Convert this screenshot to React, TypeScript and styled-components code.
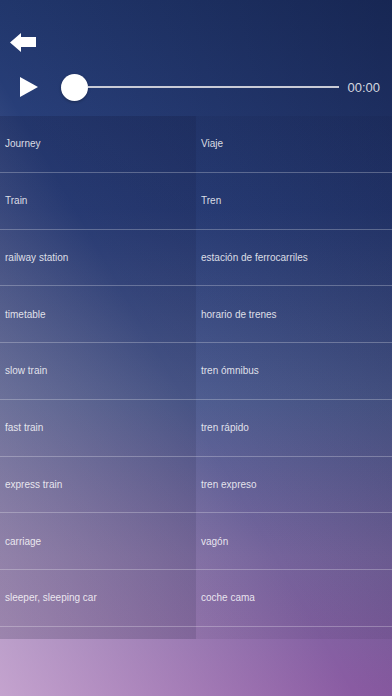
import React from 'react'
import styled, { createGlobalStyle } from 'styled-components'

const GlobalStyle = createGlobalStyle`
  html, body {
    margin: 0;
    padding: 0;
    height: 100%;
  }
  body {
    font-family: "Liberation Sans", Arial, sans-serif;
    -webkit-font-smoothing: antialiased;
  }
`

const Screen = styled.div`
  position: relative;
  width: 392px;
  height: 696px;
  overflow: hidden;
  display: flex;
  flex-direction: column;
  background:
    linear-gradient(60deg, rgba(255, 235, 250, 0.5) 0%, rgba(255, 255, 255, 0) 45%, rgba(5, 10, 40, 0.38) 100%),
    linear-gradient(180deg, #22386e 0%, #2d4482 30%, #56659a 58%, #7d6aa4 80%, #8a5aa2 100%);
`

const Header = styled.div`
  height: 116px;
  flex-shrink: 0;
  display: flex;
  flex-direction: column;
  box-sizing: border-box;
  padding-top: 33px;
`

const BackButton = styled.button`
  width: 26px;
  height: 19px;
  margin-left: 10px;
  padding: 0;
  border: none;
  background: none;
  display: flex;
`

const Player = styled.div`
  display: flex;
  align-items: center;
  height: 28px;
  margin-top: 21px;
  padding-left: 20px;
  padding-right: 12px;
`

const PlayButton = styled.button`
  width: 18px;
  height: 20px;
  padding: 0;
  border: none;
  background: none;
  display: flex;
`

const Slider = styled.div`
  flex: 1;
  display: flex;
  align-items: center;
  margin-left: 23px;
  margin-right: 8px;
`

const Knob = styled.div`
  width: 27px;
  height: 27px;
  border-radius: 50%;
  background: #ffffff;
  box-shadow: 0 1px 3px rgba(0, 0, 0, 0.3);
  flex-shrink: 0;
`

const Track = styled.div`
  flex: 1;
  height: 2px;
  background: #c9cbd6;
`

const Time = styled.span`
  font-size: 13px;
  color: rgba(255, 255, 255, 0.82);
`

const Table = styled.div`
  height: 523px;
  flex-shrink: 0;
  overflow: hidden;
  background: linear-gradient(
    90deg,
    rgba(10, 10, 40, 0.18) 0%,
    rgba(10, 10, 40, 0.18) 50%,
    rgba(10, 10, 40, 0.07) 50%,
    rgba(10, 10, 40, 0.07) 100%
  );
`

const Row = styled.div`
  display: grid;
  grid-template-columns: 196px 196px;
  height: 56.75px;
  box-sizing: border-box;
  border-bottom: 1px solid rgba(255, 255, 255, 0.26);
`

const Cell = styled.div`
  display: flex;
  align-items: center;
  padding-left: 5px;
  font-size: 10px;
  color: rgba(255, 255, 255, 0.84);
  white-space: nowrap;
`

const words: [string, string][] = [
  ['Journey', 'Viaje'],
  ['Train', 'Tren'],
  ['railway station', 'estación de ferrocarriles'],
  ['timetable', 'horario de trenes'],
  ['slow train', 'tren ómnibus'],
  ['fast train', 'tren rápido'],
  ['express train', 'tren expreso'],
  ['carriage', 'vagón'],
  ['sleeper, sleeping car', 'coche cama'],
]

export default function App() {
  return (
    <>
      <GlobalStyle />
      <Screen>
        <Header>
          <BackButton aria-label="back">
            <svg width="26" height="19" viewBox="0 0 26 19">
              <path d="M0 9.5 L11 0 L11 4 L26 4 L26 14 L11 14 L11 19 Z" fill="#fff" />
            </svg>
          </BackButton>
          <Player>
            <PlayButton aria-label="play">
              <svg width="18" height="20" viewBox="0 0 18 20">
                <path d="M0 0 L18 10 L0 20 Z" fill="#fff" />
              </svg>
            </PlayButton>
            <Slider>
              <Knob />
              <Track />
            </Slider>
            <Time>00:00</Time>
          </Player>
        </Header>
        <Table>
          {words.map(([en, es]) => (
            <Row key={en}>
              <Cell>{en}</Cell>
              <Cell>{es}</Cell>
            </Row>
          ))}
        </Table>
      </Screen>
    </>
  )
}
